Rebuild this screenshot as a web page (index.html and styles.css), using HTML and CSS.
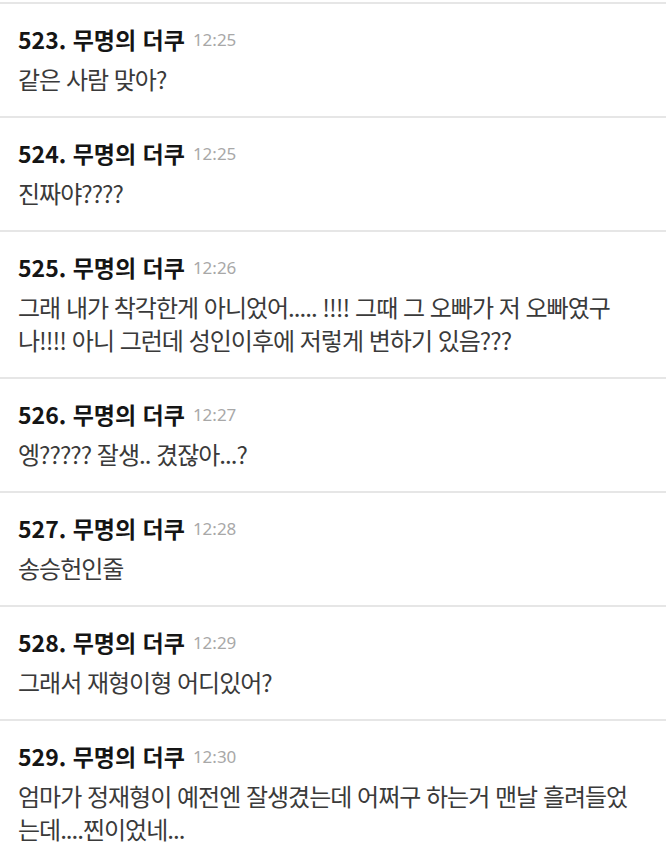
FILE: index.html
```html
<!DOCTYPE html>
<html lang="ko">
<head>
    <meta charset="UTF-8">
    <meta name="viewport" content="width=device-width, initial-scale=1.0">
    <title>댓글</title>
    <link rel="stylesheet" href="styles.css">
</head>
<body>
    <div class="comments">
        <div class="comment">
            <div class="head"><span class="name">523. 무명의 더쿠</span><span class="time">12:25</span></div>
            <p class="text">같은 사람 맞아?</p>
        </div>
        <div class="comment">
            <div class="head"><span class="name">524. 무명의 더쿠</span><span class="time">12:25</span></div>
            <p class="text">진짜야????</p>
        </div>
        <div class="comment">
            <div class="head"><span class="name">525. 무명의 더쿠</span><span class="time">12:26</span></div>
            <p class="text">그래 내가 착각한게 아니었어..... !!!! 그때 그 오빠가 저 오빠였구나!!!! 아니 그런데 성인이후에 저렇게 변하기 있음???</p>
        </div>
        <div class="comment">
            <div class="head"><span class="name">526. 무명의 더쿠</span><span class="time">12:27</span></div>
            <p class="text">엥????? 잘생.. 겼잖아...?</p>
        </div>
        <div class="comment">
            <div class="head"><span class="name">527. 무명의 더쿠</span><span class="time">12:28</span></div>
            <p class="text">송승헌인줄</p>
        </div>
        <div class="comment">
            <div class="head"><span class="name">528. 무명의 더쿠</span><span class="time">12:29</span></div>
            <p class="text">그래서 재형이형 어디있어?</p>
        </div>
        <div class="comment">
            <div class="head"><span class="name">529. 무명의 더쿠</span><span class="time">12:30</span></div>
            <p class="text">엄마가 정재형이 예전엔 잘생겼는데 어쩌구 하는거 맨날 흘려들었는데....찐이었네...</p>
        </div>
    </div>
</body>
</html>
```

FILE: styles.css
```css
body { margin: 0; background: #fff; font-family: "Noto Sans CJK KR", "Noto Sans", sans-serif; }
.comments { margin-top: 2px; border-bottom: 2px solid #e6e6e6; }
.comment { border-top: 2px solid #e6e6e6; padding: 20px 18px 21px 18px; }
.head { display: flex; align-items: center; height: 30px; margin-bottom: 8px; }
.name { font-size: 23px; font-weight: bold; color: #151515; line-height: 30px; }
.time { font-size: 17px; color: #a8a8a8; margin-left: 8px; margin-top: 2px; line-height: 30px; font-family: "Noto Sans", sans-serif; }
.text { margin: 0; font-size: 24px; letter-spacing: -1px; line-height: 33px; color: #3a3a3a; }
```
